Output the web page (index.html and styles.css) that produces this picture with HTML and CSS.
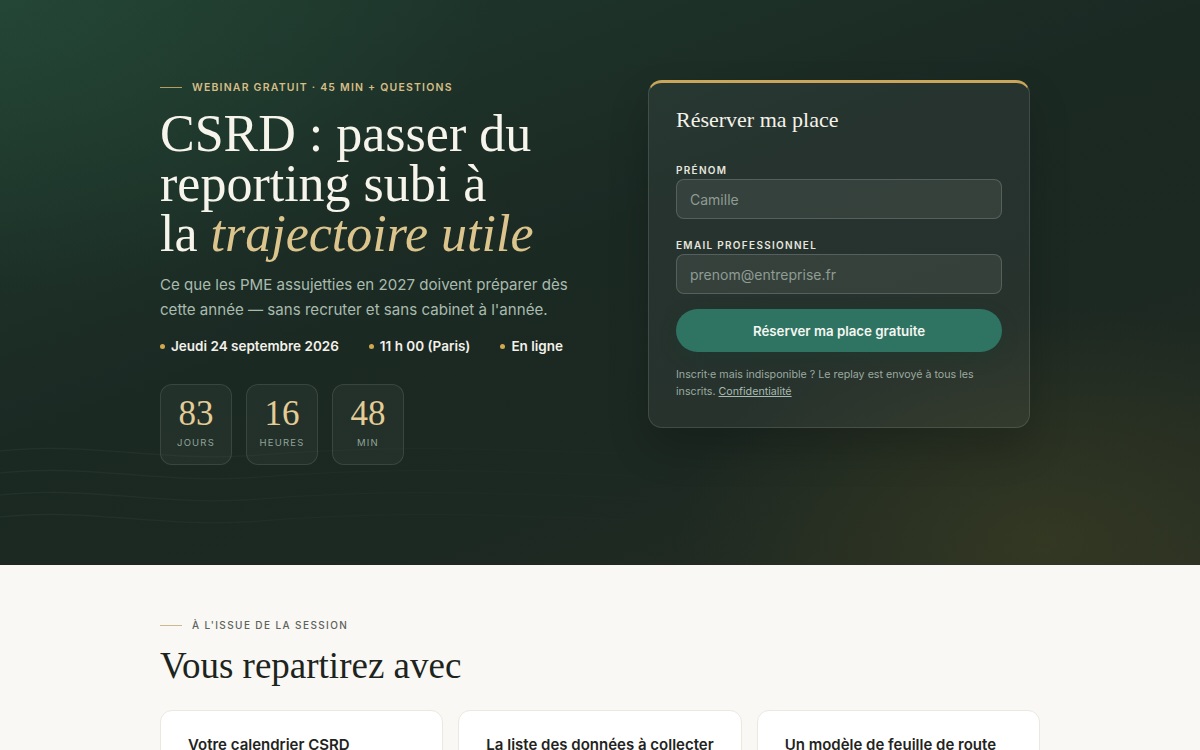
FILE: index.html
```html
<!DOCTYPE html>
<html lang="fr">
<head>
    <meta charset="UTF-8">
    <meta name="viewport" content="width=device-width, initial-scale=1.0">
    <title>Webinar CSRD</title>
    <link rel="stylesheet" href="styles.css">
</head>
<body>
    <section class="hero">
        <svg class="waves" width="700" height="100" viewBox="0 0 700 100" fill="none">
            <defs>
                <linearGradient id="fade" x1="0" y1="0" x2="1" y2="0">
                    <stop offset="0" stop-color="#9fbfae" stop-opacity="0.06" />
                    <stop offset="0.5" stop-color="#9fbfae" stop-opacity="0.03" />
                    <stop offset="1" stop-color="#9fbfae" stop-opacity="0" />
                </linearGradient>
            </defs>
            <path d="M0 8 C90 -2 160 20 260 12 S440 2 700 14" />
            <path d="M0 30 C90 20 160 42 260 34 S440 24 700 36" />
            <path d="M0 52 C90 42 160 64 260 56 S440 46 700 58" />
            <path d="M0 74 C90 64 160 86 260 78 S440 68 700 80" />
        </svg>
        <div class="container hero-inner">
            <div class="hero-text">
                <p class="eyebrow"><span class="rule"></span>WEBINAR GRATUIT · 45 MIN + QUESTIONS</p>
                <h1>CSRD : passer du reporting subi à<br>la <em>trajectoire utile</em></h1>
                <p class="lead">Ce que les PME assujetties en 2027 doivent préparer dès cette année — sans recruter et sans cabinet à l'année.</p>
                <ul class="meta">
                    <li>Jeudi 24 septembre 2026</li>
                    <li>11 h 00 (Paris)</li>
                    <li>En ligne</li>
                </ul>
                <div class="countdown">
                    <div class="unit"><span class="num">83</span><span class="lbl">JOURS</span></div>
                    <div class="unit"><span class="num">16</span><span class="lbl">HEURES</span></div>
                    <div class="unit"><span class="num">48</span><span class="lbl">MIN</span></div>
                </div>
            </div>

            <form class="signup">
                <h2>Réserver ma place</h2>
                <label class="field">
                    <span>PRÉNOM</span>
                    <input type="text" placeholder="Camille">
                </label>
                <label class="field">
                    <span>EMAIL PROFESSIONNEL</span>
                    <input type="email" placeholder="prenom@entreprise.fr">
                </label>
                <button type="button" class="submit">Réserver ma place gratuite</button>
                <p class="note">Inscrit·e mais indisponible ? Le replay est envoyé à tous les inscrits. <a href="#">Confidentialité</a></p>
            </form>
        </div>
    </section>

    <section class="takeaways">
        <div class="container">
            <p class="eyebrow dark"><span class="rule"></span>À L'ISSUE DE LA SESSION</p>
            <h2>Vous repartirez avec</h2>
            <div class="cards">
                <div class="card"><h3>Votre calendrier CSRD</h3></div>
                <div class="card"><h3>La liste des données à collecter</h3></div>
                <div class="card"><h3>Un modèle de feuille de route</h3></div>
            </div>
        </div>
    </section>
</body>
</html>
```

FILE: styles.css
```css
* {
    box-sizing: border-box;
}

body {
    margin: 0;
    font-family: Inter, "Noto Sans", sans-serif;
    background-color: #f9f8f4;
}

.container {
    width: 880px;
    margin: 0 auto;
}

/* hero */

.hero {
    position: relative;
    height: 565px;
    overflow: hidden;
    background:
        radial-gradient(ellipse 520px 340px at 1040px 540px, rgba(70, 70, 35, 0.45), transparent 70%),
        radial-gradient(ellipse 700px 420px at 0 0, rgba(40, 80, 60, 0.55), transparent 70%),
        linear-gradient(160deg, #1f3a2e 0%, #1b2923 45%, #1c2822 70%, #262d23 100%);
}

.waves {
    position: absolute;
    left: 0;
    bottom: 22px;
}

.waves path {
    stroke: url(#fade);
    stroke-width: 1.2;
}

.hero-inner {
    position: relative;
    display: flex;
    justify-content: space-between;
    align-items: flex-start;
    padding-top: 80px;
    padding-right: 10px;
}

.hero-text {
    width: 440px;
}

.eyebrow {
    display: flex;
    align-items: center;
    gap: 10px;
    margin: 0;
    padding-top: 1px;
    font-size: 10.5px;
    font-weight: 600;
    letter-spacing: 1.2px;
    color: #d7be85;
}

.eyebrow .rule {
    width: 22px;
    height: 1px;
    background-color: #b59c62;
}

h1 {
    margin: 15px 0 0;
    font-family: "Liberation Serif", "DejaVu Serif", serif;
    font-size: 52px;
    line-height: 50px;
    font-weight: 400;
    color: #f7f4ec;
}

h1 em {
    color: #dcc48d;
}

.lead {
    margin: 13px 0 0;
    font-size: 15.1px;
    line-height: 25px;
    color: #a9bbae;
}

.meta {
    display: flex;
    gap: 30px;
    list-style: none;
    margin: 16px 0 0;
    padding: 0;
    font-size: 13.5px;
    font-weight: 600;
    color: #f3f1ea;
}

.meta li {
    display: flex;
    align-items: center;
    gap: 6px;
}

.meta li::before {
    content: "";
    width: 5px;
    height: 5px;
    border-radius: 50%;
    background-color: #d0a94f;
}

.countdown {
    display: flex;
    gap: 14px;
    margin-top: 30px;
}

.unit {
    display: flex;
    flex-direction: column;
    align-items: center;
    min-width: 72px;
    height: 81px;
    padding: 12px 12px 0;
    border: 1px solid rgba(255, 255, 255, 0.1);
    border-radius: 12px;
    background-color: rgba(255, 255, 255, 0.04);
}

.num {
    font-family: "Liberation Serif", "DejaVu Serif", serif;
    font-size: 35px;
    line-height: 34px;
    color: #e3cc95;
}

.lbl {
    margin-top: 6px;
    font-size: 9.5px;
    letter-spacing: 1.2px;
    color: #8fa497;
}

/* form card */

.signup {
    width: 382px;
    padding: 24px 27px 27px;
    border: 1px solid rgba(255, 255, 255, 0.12);
    border-top: 3px solid #c9a65a;
    border-radius: 14px;
    background-color: rgba(255, 255, 255, 0.05);
    box-shadow: 0 20px 40px rgba(0, 0, 0, 0.18);
}

.signup h2 {
    margin: 0 0 31px;
    font-family: "Liberation Serif", "DejaVu Serif", serif;
    font-size: 22px;
    line-height: 26px;
    font-weight: 400;
    color: #f5f2ea;
}

.field {
    display: block;
    margin-bottom: 20px;
}

.field span {
    display: block;
    margin-bottom: 3px;
    font-size: 10px;
    font-weight: 600;
    letter-spacing: 1.3px;
    color: #e6e6df;
}

.field input {
    display: block;
    width: 100%;
    height: 40px;
    padding: 0 13px;
    border: 1px solid rgba(255, 255, 255, 0.16);
    border-radius: 8px;
    background-color: rgba(255, 255, 255, 0.07);
    font-family: inherit;
    font-size: 14px;
    color: #f1f1ea;
    outline: none;
}

.field input::placeholder {
    color: #8e9c93;
}

.submit {
    display: block;
    width: 100%;
    height: 43px;
    margin-top: -5px;
    border: none;
    border-radius: 22px;
    background-color: #2f7462;
    box-shadow: 0 6px 16px rgba(20, 60, 45, 0.35);
    font-family: inherit;
    font-size: 13.3px;
    font-weight: 600;
    color: #f4f6f2;
    cursor: pointer;
}

.note {
    margin: 14px 0 0;
    font-size: 10.7px;
    line-height: 17px;
    color: #9aaaa0;
}

.note a {
    color: #a7bcb0;
}

/* takeaways */

.takeaways {
    padding-top: 53px;
}

.eyebrow.dark {
    font-size: 10px;
    color: #5d625c;
    font-weight: 500;
    letter-spacing: 1.4px;
}

.eyebrow.dark .rule {
    background-color: #cdb98b;
}

.takeaways h2 {
    margin: 13px 0 0;
    font-family: "Liberation Serif", "DejaVu Serif", serif;
    font-size: 37px;
    line-height: 44px;
    font-weight: 400;
    color: #1d2420;
}

.cards {
    display: grid;
    grid-template-columns: repeat(3, 1fr);
    gap: 15px;
    margin-top: 22px;
}

.card {
    height: 120px;
    padding: 24px 27px;
    border: 1px solid #ebe8e0;
    border-radius: 12px;
    background-color: #ffffff;
}

.card h3 {
    margin: 0;
    font-size: 15px;
    font-weight: 600;
    color: #1f2421;
}
```
